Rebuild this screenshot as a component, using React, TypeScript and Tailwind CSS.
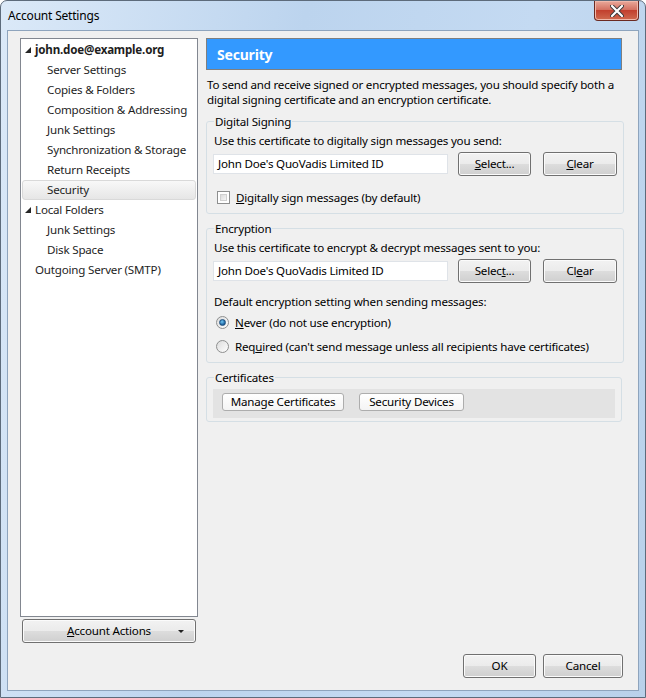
import React from "react";

const FONT = { fontFamily: '"Noto Sans", "Open Sans", sans-serif' };

const BTN =
  "flex items-center justify-center rounded-[3px] border border-[#707070] bg-[linear-gradient(#f2f2f2,#ebebeb_50%,#dddddd_50%,#cfcfcf)] shadow-[inset_0_0_0_1px_#fbfbfb] text-[11.6px] text-black";

function TreeRow({
  label,
  level,
  bold,
  expander,
  selected,
}: {
  label: string;
  level: 0 | 1;
  bold?: boolean;
  expander?: boolean;
  selected?: boolean;
}) {
  return (
    <div
      className={
        "flex h-[20px] items-center mx-[1px] " +
        (selected
          ? "rounded-[3px] border border-[#d9d9d9] bg-[linear-gradient(#f8f8f8,#e6e6e6)]"
          : "border border-transparent")
      }
    >
      <div className="w-[12px] shrink-0 flex items-center">
        {expander && (
          <svg width="6" height="6" viewBox="0 0 6 6" className="ml-[2px]">
            <polygon points="6,0 6,6 0,6" fill="#262626" />
          </svg>
        )}
      </div>
      <span
        className={
          "text-[11.6px] text-[#1e1e1e] whitespace-nowrap " +
          (level === 1 ? "pl-[12px] " : "") +
          (bold ? "font-bold" : "")
        }
      >
        {label}
      </span>
    </div>
  );
}

function Group({ title, children }: { title: string; children: React.ReactNode }) {
  return (
    <fieldset className="rounded-[3px] border border-[#d5dfe5] px-[6px]">
      <legend className="ml-[1px] px-[1px] text-[11.6px] leading-[15px] text-black">
        {title}
      </legend>
      {children}
    </fieldset>
  );
}

function CertRow({ sel, clr }: { sel: React.ReactNode; clr: React.ReactNode }) {
  return (
    <div className="flex items-center mt-[4px]">
      <div className="h-[20px] w-[235px] border border-[#dfe3e8] bg-white flex items-center pl-[4px] text-[11.6px] text-black">
        John Doe's QuoVadis Limited ID
      </div>
      {sel}
      {clr}
    </div>
  );
}

function Radio({ checked, children }: { checked?: boolean; children: React.ReactNode }) {
  return (
    <div className="flex items-center h-[15px] pl-[3px]">
      <div className="w-[13px] h-[13px] rounded-full border border-[#8e8f8f] bg-[linear-gradient(135deg,#dcdcdc,#fefefe)] flex items-center justify-center">
        {checked && (
          <div className="w-[7px] h-[7px] rounded-full bg-[radial-gradient(circle_at_40%_35%,#6ec6f4,#1b5f9c_70%)] border border-[#1d4f7e]" />
        )}
      </div>
      <span className="ml-[6px] text-[11.6px] text-black whitespace-nowrap">{children}</span>
    </div>
  );
}

export default function App() {
  return (
    <div
      style={FONT}
      className="w-[646px] h-[698px] tracking-[-0.2px] rounded-t-[7px] border border-[#5d6b7b] bg-[linear-gradient(100deg,#dbe9f8,#bcd4ee_40%,#c4daf2_70%,#b9d1ea)] flex flex-col overflow-hidden"
    >
      {/* title bar */}
      <div className="h-[29px] flex items-start shrink-0">
        <span className="ml-[7px] mt-[6px] text-[12px] text-black">Account Settings</span>
        <div className="ml-auto mr-[6px] w-[45px] h-[20px] rounded-b-[4px] border border-t-0 border-[#6b2a22] bg-[linear-gradient(#e9a99b,#d47262_45%,#c2402e_50%,#cf6a4f)] flex items-center justify-center shadow-[inset_0_0_0_1px_#f0b8aa]">
          <svg width="14" height="12" viewBox="0 0 14 12">
            <path d="M2 1 L12 11 M12 1 L2 11" stroke="#3b3b3b" strokeWidth="4" strokeLinecap="round" />
            <path d="M2 1 L12 11 M12 1 L2 11" stroke="#ffffff" strokeWidth="2.2" strokeLinecap="round" />
          </svg>
        </div>
      </div>

      {/* client */}
      <div className="mx-[6px] h-[661px] border border-[#8ea4bd] bg-[#f0f0f0] flex flex-col pl-[12px] pt-[7px]">
        <div className="flex">
          {/* left column */}
          <div className="w-[178px] flex flex-col">
            <div className="h-[579px] border border-[#828790] bg-white pt-[1px]">
              <TreeRow label="john.doe@example.org" level={0} bold expander />
              <TreeRow label="Server Settings" level={1} />
              <TreeRow label="Copies & Folders" level={1} />
              <TreeRow label="Composition & Addressing" level={1} />
              <TreeRow label="Junk Settings" level={1} />
              <TreeRow label="Synchronization & Storage" level={1} />
              <TreeRow label="Return Receipts" level={1} />
              <TreeRow label="Security" level={1} selected />
              <TreeRow label="Local Folders" level={0} expander />
              <TreeRow label="Junk Settings" level={1} />
              <TreeRow label="Disk Space" level={1} />
              <TreeRow label="Outgoing Server (SMTP)" level={0} />
            </div>
            <div className={BTN + " relative mt-[2px] ml-[2px] w-[174px] h-[24px]"}>
              <span>
                <span className="underline">A</span>ccount Actions
              </span>
              <span className="absolute right-[11px] top-[10px] w-0 h-0 border-l-[3px] border-r-[3px] border-t-[3px] border-l-transparent border-r-transparent border-t-[#222]" />
            </div>
          </div>

          {/* right column */}
          <div className="ml-[8px] w-[416px] flex flex-col">
            <div className="h-[32px] border border-[#7f7f7f] bg-[#3399ff] flex items-center pl-[10px]">
              <span className="text-[14px] font-bold text-white">Security</span>
            </div>
            <p className="mt-[7px] pl-[1px] text-[11.6px] leading-[15px] text-black">
              To send and receive signed or encrypted messages, you should specify both a
              digital signing certificate and an encryption certificate.
            </p>

            <div className="mt-[7px]">
              <Group title="Digital Signing">
                <div className="mt-[4px] text-[11.6px] leading-[15px] text-black pl-[1px]">
                  Use this certificate to digitally sign messages you send:
                </div>
                <CertRow
                  sel={
                    <div className={BTN + " ml-[10px] w-[73px] h-[24px] border-[#3c7fb1] shadow-[inset_0_0_0_1px_#b9e4fb]"}>
                      <span>
                        <span className="underline">S</span>elect...
                      </span>
                    </div>
                  }
                  clr={
                    <div className={BTN + " ml-[12px] w-[74px] h-[24px]"}>
                      <span>
                        <span className="underline">C</span>lear
                      </span>
                    </div>
                  }
                />
                <div className="flex items-center h-[15px] mt-[14px] mb-[8px] pl-[4px]">
                  <div className="w-[13px] h-[13px] border border-[#8e8f8f] bg-white p-[2px]">
                    <div className="w-full h-full bg-[linear-gradient(135deg,#dcdcdc,#f6f6f6)] border border-[#d0d0d0]" />
                  </div>
                  <span className="ml-[6px] text-[11.6px] text-black">
                    <span className="underline">D</span>igitally sign messages (by default)
                  </span>
                </div>
              </Group>
            </div>

            <div className="mt-[7px]">
              <Group title="Encryption">
                <div className="mt-[4px] text-[11.6px] leading-[15px] text-black pl-[1px]">
                  Use this certificate to encrypt &amp; decrypt messages sent to you:
                </div>
                <CertRow
                  sel={
                    <div className={BTN + " ml-[10px] w-[73px] h-[24px]"}>
                      <span>
                        Selec<span className="underline">t</span>...
                      </span>
                    </div>
                  }
                  clr={
                    <div className={BTN + " ml-[12px] w-[74px] h-[24px]"}>
                      <span>
                        Cl<span className="underline">e</span>ar
                      </span>
                    </div>
                  }
                />
                <div className="mt-[11px] pl-[1px] text-[11.6px] leading-[15px] text-black">
                  Default encryption setting when sending messages:
                </div>
                <div className="mt-[6px]">
                  <Radio checked>
                    <span className="underline">N</span>ever (do not use encryption)
                  </Radio>
                </div>
                <div className="mt-[9px] mb-[8px]">
                  <Radio>
                    Req<span className="underline">u</span>ired (can't send message unless all
                    recipients have certificates)
                  </Radio>
                </div>
              </Group>
            </div>

            <div className="mt-[7px]">
              <Group title="Certificates">
                <div className="mt-[4px] mb-[3px] h-[29px] bg-[#e3e3e3] flex items-start pt-[4px] pl-[9px]">
                  <div className="h-[18px] w-[122px] rounded-[3px] border border-[#adadad] bg-[linear-gradient(#ffffff,#f4f4f4)] flex items-center justify-center text-[11.6px] text-black">
                    Manage Certificates
                  </div>
                  <div className="ml-[15px] h-[18px] w-[105px] rounded-[3px] border border-[#adadad] bg-[linear-gradient(#ffffff,#f4f4f4)] flex items-center justify-center text-[11.6px] text-black">
                    Security Devices
                  </div>
                </div>
              </Group>
            </div>
          </div>
        </div>

        {/* bottom buttons */}
        <div className="flex justify-end mt-[11px] pr-[15px]">
          <div className={BTN + " w-[73px] h-[24px]"}>OK</div>
          <div className={BTN + " ml-[7px] w-[80px] h-[24px]"}>Cancel</div>
        </div>
      </div>
    </div>
  );
}
